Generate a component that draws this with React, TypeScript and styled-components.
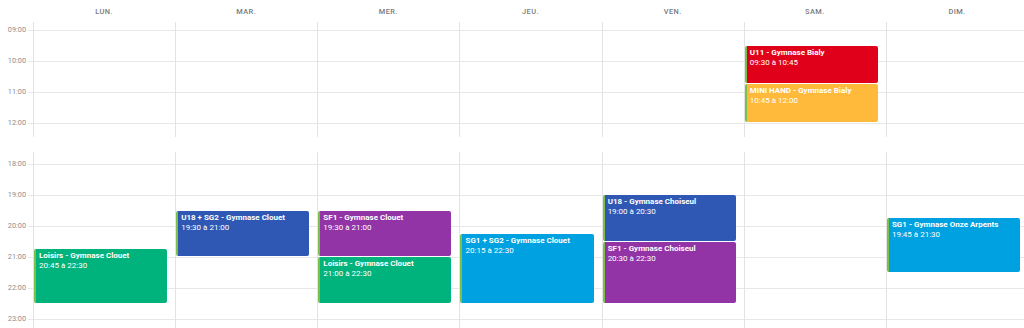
import React from "react";
import styled, { createGlobalStyle } from "styled-components";

const GUTTER = 33;
const COL = 142.17;
const HOUR = 31;

const GlobalStyle = createGlobalStyle`
  html, body { margin: 0; padding: 0; background: #ffffff; overflow: hidden; }
  body { font-family: Roboto, "Liberation Sans", Arial, sans-serif; }
  * { box-sizing: border-box; }
`;

const Page = styled.div`
  width: ${GUTTER + COL * 7}px;
  display: flex;
  flex-direction: column;
`;

const HeaderRow = styled.div`
  display: grid;
  grid-template-columns: ${GUTTER}px repeat(7, ${COL}px);
  height: 22px;
  align-items: center;
`;

const DayLabel = styled.div`
  text-align: center;
  font-size: 7.4px;
  font-weight: 500;
  letter-spacing: 0.45px;
  color: #777b80;
  text-transform: uppercase;
`;

const Section = styled.div<{ $h: number; $mt: number }>`
  display: flex;
  height: ${(p) => p.$h}px;
  margin-top: ${(p) => p.$mt}px;
  overflow: hidden;
`;

const Gutter = styled.div<{ $offset: number }>`
  width: ${GUTTER}px;
  flex: none;
  padding-top: ${(p) => p.$offset}px;
`;

const TimeSlot = styled.div`
  height: ${HOUR}px;
  display: flex;
  justify-content: flex-end;
  align-items: flex-start;
  gap: 2px;
`;

const TimeLabel = styled.span`
  font-size: 7.3px;
  line-height: 0;
  color: #8a8d91;
`;

const Tick = styled.span`
  width: 5px;
  height: 0;
  border-top: 1px solid #e8e8e8;
`;

const DayCol = styled.div<{ $offset: number }>`
  width: ${COL}px;
  flex: none;
  position: relative;
  border-left: 1px solid #e3e3e3;
  padding-top: ${(p) => p.$offset}px;
`;

const Slot = styled.div`
  height: ${HOUR}px;
  border-top: 1px solid #e8e8e8;
`;

const Event = styled.div<{ $bg: string }>`
  position: absolute;
  left: 0;
  width: calc(100% - 8px);
  background: ${(p) => p.$bg};
  border-left: 2px solid #7cbf4a;
  border-radius: 2px;
  padding: 2px 3px;
  color: #ffffff;
  font-size: 8px;
  line-height: 10px;
  overflow: hidden;
  white-space: nowrap;
`;

const EventTitle = styled.div`
  font-weight: 700;
`;

const EventTime = styled.div`
  font-weight: 400;
`;

const COLORS = {
  green: "#00b27b",
  blue: "#2f58b4",
  purple: "#9233a6",
  sky: "#00a1e0",
  red: "#e1001a",
  amber: "#ffba3b",
};

type Ev = { day: number; title: string; start: string; end: string; color: string };

const DAYS = ["Lun.", "Mar.", "Mer.", "Jeu.", "Ven.", "Sam.", "Dim."];

const morning: Ev[] = [
  { day: 5, title: "U11 - Gymnase Bialy", start: "09:30", end: "10:45", color: COLORS.red },
  { day: 5, title: "MINI HAND - Gymnase Bialy", start: "10:45", end: "12:00", color: COLORS.amber },
];

const evening: Ev[] = [
  { day: 0, title: "Loisirs - Gymnase Clouet", start: "20:45", end: "22:30", color: COLORS.green },
  { day: 1, title: "U18 + SG2 - Gymnase Clouet", start: "19:30", end: "21:00", color: COLORS.blue },
  { day: 2, title: "SF1 - Gymnase Clouet", start: "19:30", end: "21:00", color: COLORS.purple },
  { day: 2, title: "Loisirs - Gymnase Clouet", start: "21:00", end: "22:30", color: COLORS.green },
  { day: 3, title: "SG1 + SG2 - Gymnase Clouet", start: "20:15", end: "22:30", color: COLORS.sky },
  { day: 4, title: "U18 - Gymnase Choiseul", start: "19:00", end: "20:30", color: COLORS.blue },
  { day: 4, title: "SF1 - Gymnase Choiseul", start: "20:30", end: "22:30", color: COLORS.purple },
  { day: 6, title: "SG1 - Gymnase Onze Arpents", start: "19:45", end: "21:30", color: COLORS.sky },
];

const toH = (t: string) => {
  const [h, m] = t.split(":").map(Number);
  return h + m / 60;
};

function CalendarSection({
  hours,
  offset,
  height,
  marginTop,
  events,
}: {
  hours: string[];
  offset: number;
  height: number;
  marginTop: number;
  events: Ev[];
}) {
  const first = toH(hours[0]);
  return (
    <Section $h={height} $mt={marginTop}>
      <Gutter $offset={offset}>
        {hours.map((h) => (
          <TimeSlot key={h}>
            <TimeLabel>{h}</TimeLabel>
            <Tick />
          </TimeSlot>
        ))}
      </Gutter>
      {DAYS.map((d, i) => (
        <DayCol key={d} $offset={offset}>
          {hours.map((h) => (
            <Slot key={h} />
          ))}
          {events
            .filter((e) => e.day === i)
            .map((e) => {
              const top = offset + (toH(e.start) - first) * HOUR;
              const h = (toH(e.end) - toH(e.start)) * HOUR - 1;
              return (
                <Event key={e.title + e.start} $bg={e.color} style={{ top, height: h }}>
                  <EventTitle>{e.title}</EventTitle>
                  <EventTime>
                    {e.start} à {e.end}
                  </EventTime>
                </Event>
              );
            })}
        </DayCol>
      ))}
    </Section>
  );
}

export default function App() {
  return (
    <>
      <GlobalStyle />
      <Page>
        <HeaderRow>
          <span />
          {DAYS.map((d) => (
            <DayLabel key={d}>{d}</DayLabel>
          ))}
        </HeaderRow>
        <CalendarSection
          hours={["09:00", "10:00", "11:00", "12:00"]}
          offset={8}
          height={115}
          marginTop={0}
          events={morning}
        />
        <CalendarSection
          hours={["18:00", "19:00", "20:00", "21:00", "22:00", "23:00"]}
          offset={12}
          height={190}
          marginTop={15}
          events={evening}
        />
      </Page>
    </>
  );
}
